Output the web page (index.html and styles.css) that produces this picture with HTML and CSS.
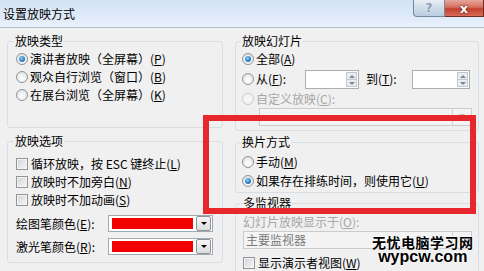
FILE: index.html
```html
<!DOCTYPE html>
<html lang="zh-CN">

<head>
    <meta charset="UTF-8">
    <title>设置放映方式</title>
    <link rel="stylesheet" href="styles.css">
</head>

<body>
    <div class="titlebar">
        <span class="title">设置放映方式</span>
        <div class="caption">
            <span class="btn-help">?</span>
            <span class="btn-close">x</span>
        </div>
    </div>

    <div class="dialog">
        <div class="col col-left">
            <fieldset class="grp grp-type">
                <legend>放映类型</legend>
                <div class="opt"><span class="radio on"></span>演讲者放映（全屏幕）(<u>P</u>)</div>
                <div class="opt"><span class="radio"></span>观众自行浏览（窗口）(<u>B</u>)</div>
                <div class="opt"><span class="radio"></span>在展台浏览（全屏幕）(<u>K</u>)</div>
            </fieldset>

            <fieldset class="grp grp-opts">
                <legend>放映选项</legend>
                <div class="opt"><span class="check"></span>循环放映，按 ESC 键终止(<u>L</u>)</div>
                <div class="opt"><span class="check"></span>放映时不加旁白(<u>N</u>)</div>
                <div class="opt"><span class="check"></span>放映时不加动画(<u>S</u>)</div>
                <div class="color-row first">
                    <span class="color-label">绘图笔颜色(<u>E</u>):</span>
                    <div class="color-combo"><span class="swatch"></span><span class="drop-btn"></span></div>
                </div>
                <div class="color-row">
                    <span class="color-label">激光笔颜色(<u>R</u>):</span>
                    <div class="color-combo"><span class="swatch"></span><span class="drop-btn"></span></div>
                </div>
            </fieldset>
        </div>

        <div class="col col-right">
            <fieldset class="grp grp-slides">
                <legend>放映幻灯片</legend>
                <div class="opt"><span class="radio on"></span>全部(<u>A</u>)</div>
                <div class="opt opt-range">
                    <span class="radio"></span>
                    <span class="range-label">从(<u>F</u>):</span>
                    <div class="spin spin-from"><span class="spin-btns"><i class="up"></i><i class="down"></i></span></div>
                    <span class="range-label to">到(<u>T</u>):</span>
                    <div class="spin spin-to"><span class="spin-btns"><i class="up"></i><i class="down"></i></span></div>
                </div>
                <div class="opt disabled"><span class="radio off"></span>自定义放映(<u>C</u>):</div>
                <div class="combo combo-custom"><span class="combo-btn"></span></div>
            </fieldset>

            <fieldset class="grp grp-advance">
                <legend>换片方式</legend>
                <div class="opt"><span class="radio"></span>手动(<u>M</u>)</div>
                <div class="opt"><span class="radio on"></span>如果存在排练时间，则使用它(<u>U</u>)</div>
            </fieldset>

            <fieldset class="grp grp-monitor">
                <legend>多监视器</legend>
                <div class="opt disabled">幻灯片放映显示于(<u>O</u>):</div>
                <div class="combo combo-monitor"><span class="combo-text">主要监视器</span><span class="combo-btn"></span></div>
                <div class="opt opt-presenter"><span class="check"></span>显示演示者视图(<u>W</u>)</div>
            </fieldset>
        </div>
    </div>

    <!-- 红框标注 -->
    <div class="mark"></div>

    <div class="watermark">
        <p class="wm-cn">无忧电脑学习网</p>
        <p class="wm-en">wypcw.com</p>
    </div>
</body>

</html>
```

FILE: styles.css
```css
* {
    margin: 0;
    padding: 0;
    box-sizing: border-box;
}

body {
    position: relative;
    width: 484px;
    height: 271px;
    overflow: hidden;
    background: #f0f0f0;
    color: #000;
    font: 12px/18px "Noto Sans CJK SC", "DejaVu Sans", sans-serif;
}

u {
    text-decoration: underline;
}

/* 标题栏 */
.titlebar {
    display: flex;
    height: 28px;
    background: linear-gradient(#d3e2f4, #dfeaf8 60%, #e9f1fb);
    border-bottom: 1px solid #aebfd3;
}

.title {
    font-size: 12px;
    line-height: 27px;
    padding-left: 3px;
}

.caption {
    display: flex;
    margin-left: auto;
    height: 17px;
}

.btn-help,
.btn-close {
    display: flex;
    align-items: center;
    justify-content: center;
    height: 17px;
    font: bold 12px/1 "DejaVu Sans", sans-serif;
    color: #fff;
}

.btn-help {
    width: 32px;
    background: linear-gradient(#e9eff6, #cfdbe9 50%, #bccde2);
    border: 1px solid #7589a3;
    border-top: none;
    border-radius: 0 0 0 4px;
    color: #8a9bb0;
    text-shadow: 0 0 1px #fff;
}

.btn-close {
    width: 39px;
    background: linear-gradient(#e6a79a, #d46f5f 45%, #c4402e 55%, #d66a57);
    border: 1px solid #6c2d25;
    border-top: none;
    border-left: none;
    text-shadow: 0 0 2px #5a1a12, 0 0 1px #5a1a12;
    font-size: 13px;
}

/* 对话框主体 */
.dialog {
    display: flex;
    gap: 12px;
    padding: 5px 0 0 7px;
}

.col {
    display: flex;
    flex-direction: column;
}

.col-left {
    width: 216px;
    gap: 5px;
}

.col-right {
    width: 244px;
}

.grp {
    min-inline-size: 0;
    border: 1px solid #d5dfe5;
    border-radius: 3px;
    padding-left: 8px;
    padding-right: 8px;
}

.grp legend {
    margin-left: -2px;
    padding: 0 1px;
    line-height: 16px;
}

.col-right .grp {
    padding-left: 6px;
    padding-right: 6px;
}

.col-right .grp legend {
    margin-left: -1px;
}

.grp-type {
    padding-top: 1px;
    padding-bottom: 23px;
}

.grp-opts {
    padding-top: 6px;
    padding-bottom: 4px;
}

.grp-slides {
    padding-top: 1px;
    padding-bottom: 4px;
}

.grp-advance {
    margin-top: 3px;
    padding-top: 2px;
    padding-bottom: 2px;
}

.grp-advance .opt {
    height: 19px;
}

.grp-monitor {
    margin-top: 2px;
    padding-top: 2px;
    padding-bottom: 6px;
}

.col-right .grp-monitor {
    padding-left: 7px;
}

/* 单选 / 复选 行 */
.opt {
    display: flex;
    align-items: center;
    height: 18px;
    white-space: nowrap;
}

.opt.disabled {
    color: #a7a7a7;
}

.opt-range {
    height: 22px;
}

.radio {
    flex: none;
    width: 12px;
    height: 12px;
    margin-right: 2px;
    border: 1px solid #8f9599;
    border-radius: 50%;
    background: radial-gradient(circle at 50% 65%, #fafafa 20%, #dcdedf 90%);
    position: relative;
}

.radio.on::after {
    content: '';
    position: absolute;
    left: 2px;
    top: 2px;
    width: 6px;
    height: 6px;
    border-radius: 50%;
    background: radial-gradient(circle at 40% 35%, #8fd0f5, #2a7ac4 60%, #15508f);
}

.radio.off {
    border-color: #c6c8ca;
    background: #f4f4f4;
}

.check {
    flex: none;
    width: 12px;
    height: 12px;
    margin-right: 3px;
    border: 1px solid #8f9599;
    background: linear-gradient(135deg, #d2d4d6, #f6f6f6);
    box-shadow: inset 0 0 0 1px #f4f4f4;
}

/* 颜色下拉 */
.color-row {
    display: flex;
    align-items: center;
    height: 23px;
}

.color-row.first {
    margin-top: 3px;
}

.color-label {
    width: 92px;
    white-space: nowrap;
}

.color-combo {
    display: flex;
    align-items: center;
    width: 105px;
    height: 17px;
    padding: 2px 1px 2px 3px;
    background: #fff;
    border: 1px solid #a3a9b1;
}

.swatch {
    width: 81px;
    height: 11px;
    background: #f20000;
}

.drop-btn {
    position: relative;
    width: 15px;
    height: 15px;
    margin-left: auto;
    border: 1px solid #8c949c;
    border-radius: 2px;
    background: linear-gradient(#f6f6f6, #dcdcdc);
}

.drop-btn::after,
.combo-btn::after {
    content: '';
    position: absolute;
    left: 4px;
    top: 5px;
    border-left: 3px solid transparent;
    border-right: 3px solid transparent;
    border-top: 3px solid #000;
}

/* 从 / 到 */
.range-label {
    width: 49px;
}

.range-label.to {
    width: 46px;
    margin-left: 7px;
}

.spin {
    display: flex;
    justify-content: flex-end;
    height: 19px;
    background: #fff;
    border: 1px solid #abadb3;
    padding: 1px;
}

.spin-from {
    width: 54px;
}

.spin-to {
    width: 58px;
}

.spin-btns {
    display: flex;
    flex-direction: column;
    width: 11px;
    border: 1px solid #c3c8cf;
    background: #e9ecf0;
}

.spin-btns i {
    position: relative;
    flex: 1;
}

.spin-btns .up {
    border-bottom: 1px solid #c3c8cf;
}

.spin-btns .up::after,
.spin-btns .down::after {
    content: '';
    position: absolute;
    left: 2px;
    top: 2px;
    border-left: 3px solid transparent;
    border-right: 3px solid transparent;
}

.spin-btns .up::after {
    border-bottom: 3px solid #7e8791;
}

.spin-btns .down::after {
    border-top: 3px solid #7e8791;
}

/* 禁用的下拉框 */
.combo {
    display: flex;
    align-items: center;
    height: 18px;
    border: 1px solid #c9cbce;
    background: #f4f4f4;
}

.combo-custom {
    margin-left: 17px;
}

.combo-text {
    padding-left: 2px;
    color: #7a7a7a;
}

.combo-btn {
    position: relative;
    width: 19px;
    height: 100%;
    margin-left: auto;
    border-left: 1px solid #d0d2d5;
}

.combo-btn::after {
    border-top-color: #bcbcbc;
    left: 6px;
}

.opt-presenter {
    margin-top: 5px;
}

/* 红框标注 */
.mark {
    position: absolute;
    left: 203px;
    top: 115px;
    width: 273px;
    height: 99px;
    border: 6px solid #e7272b;
}

/* 水印 */
.watermark {
    position: absolute;
    left: 372px;
    top: 234px;
    text-align: center;
    color: #000;
    text-shadow: 0 0 2px #fff, 0 0 2px #fff;
}

.wm-cn {
    font: bold 14px/16px "Noto Sans CJK SC", sans-serif;
    letter-spacing: 0.5px;
}

.wm-en {
    font: bold 16px/14px "Liberation Sans", sans-serif;
}
```
